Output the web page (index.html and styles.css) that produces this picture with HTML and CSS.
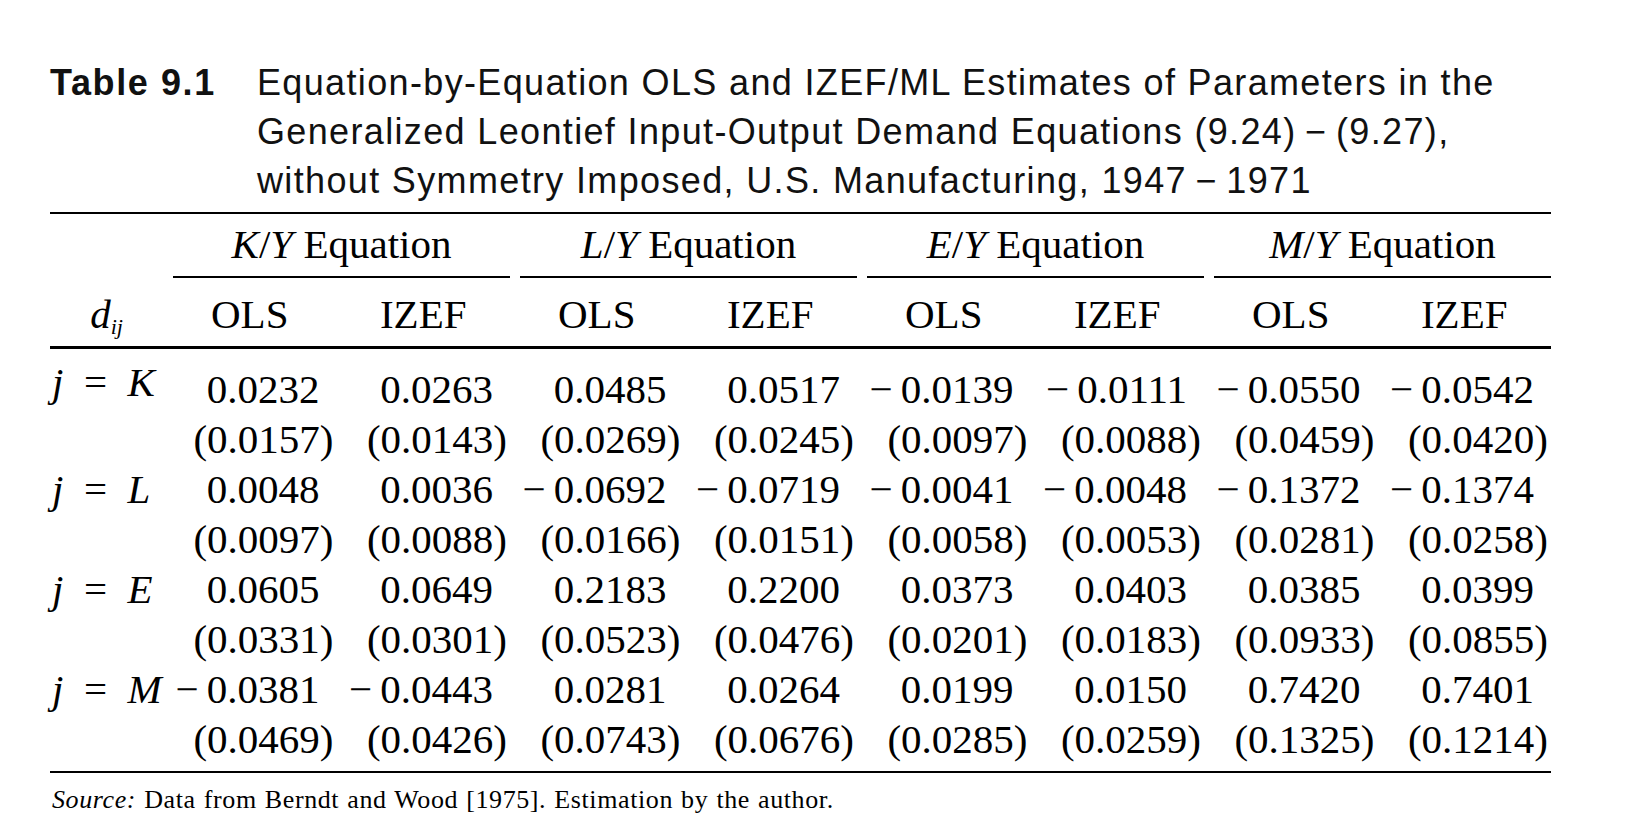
FILE: index.html
```html
<!DOCTYPE html>
<html lang="en">
<head>
    <meta charset="UTF-8">
    <title>Table 9.1</title>
    <meta name="viewport" content="width=device-width, initial-scale=1.0">
    <link rel="stylesheet" href="styles.css">
</head>
<body>
    <div class="page">
        <div class="caption">
            <div class="caption-label">Table 9.1</div>
            <div class="caption-text">
                Equation-by-Equation OLS and IZEF/ML Estimates of Parameters in the<br>
                Generalized Leontief Input-Output Demand Equations (9.24)&thinsp;&minus;&thinsp;(9.27),<br>
                without Symmetry Imposed, U.S. Manufacturing, 1947&thinsp;&minus;&thinsp;1971
            </div>
        </div>

        <table class="estimates">
            <colgroup>
                <col class="col-label">
                <col><col><col><col><col><col><col><col>
            </colgroup>
            <thead>
                <tr class="groups">
                    <th></th>
                    <th colspan="2"><div class="grp"><i>K</i>/<i>Y</i> Equation</div></th>
                    <th colspan="2"><div class="grp"><i>L</i>/<i>Y</i> Equation</div></th>
                    <th colspan="2"><div class="grp"><i>E</i>/<i>Y</i> Equation</div></th>
                    <th colspan="2"><div class="grp"><i>M</i>/<i>Y</i> Equation</div></th>
                </tr>
                <tr class="methods">
                    <th><i>d</i><sub><i>ij</i></sub></th>
                    <th>OLS</th><th>IZEF</th>
                    <th>OLS</th><th>IZEF</th>
                    <th>OLS</th><th>IZEF</th>
                    <th>OLS</th><th>IZEF</th>
                </tr>
            </thead>
            <tbody>
                <tr class="est first">
                    <td class="lbl"><i>j</i>&ensp;=&ensp;<i>K</i></td>
                    <td>0.0232</td><td>0.0263</td><td>0.0485</td><td>0.0517</td>
                    <td>&minus;&thinsp;0.0139</td><td>&minus;&thinsp;0.0111</td><td>&minus;&thinsp;0.0550</td><td>&minus;&thinsp;0.0542</td>
                </tr>
                <tr class="se">
                    <td class="lbl"></td>
                    <td>(0.0157)</td><td>(0.0143)</td><td>(0.0269)</td><td>(0.0245)</td>
                    <td>(0.0097)</td><td>(0.0088)</td><td>(0.0459)</td><td>(0.0420)</td>
                </tr>
                <tr class="est">
                    <td class="lbl"><i>j</i>&ensp;=&ensp;<i>L</i></td>
                    <td>0.0048</td><td>0.0036</td><td>&minus;&thinsp;0.0692</td><td>&minus;&thinsp;0.0719</td>
                    <td>&minus;&thinsp;0.0041</td><td>&minus;&thinsp;0.0048</td><td>&minus;&thinsp;0.1372</td><td>&minus;&thinsp;0.1374</td>
                </tr>
                <tr class="se">
                    <td class="lbl"></td>
                    <td>(0.0097)</td><td>(0.0088)</td><td>(0.0166)</td><td>(0.0151)</td>
                    <td>(0.0058)</td><td>(0.0053)</td><td>(0.0281)</td><td>(0.0258)</td>
                </tr>
                <tr class="est">
                    <td class="lbl"><i>j</i>&ensp;=&ensp;<i>E</i></td>
                    <td>0.0605</td><td>0.0649</td><td>0.2183</td><td>0.2200</td>
                    <td>0.0373</td><td>0.0403</td><td>0.0385</td><td>0.0399</td>
                </tr>
                <tr class="se">
                    <td class="lbl"></td>
                    <td>(0.0331)</td><td>(0.0301)</td><td>(0.0523)</td><td>(0.0476)</td>
                    <td>(0.0201)</td><td>(0.0183)</td><td>(0.0933)</td><td>(0.0855)</td>
                </tr>
                <tr class="est">
                    <td class="lbl"><i>j</i>&ensp;=&ensp;<i>M</i></td>
                    <td>&minus;&thinsp;0.0381</td><td>&minus;&thinsp;0.0443</td><td>0.0281</td><td>0.0264</td>
                    <td>0.0199</td><td>0.0150</td><td>0.7420</td><td>0.7401</td>
                </tr>
                <tr class="se last">
                    <td class="lbl"></td>
                    <td>(0.0469)</td><td>(0.0426)</td><td>(0.0743)</td><td>(0.0676)</td>
                    <td>(0.0285)</td><td>(0.0259)</td><td>(0.1325)</td><td>(0.1214)</td>
                </tr>
            </tbody>
        </table>

        <p class="source"><i>Source:</i> Data from Berndt and Wood [1975]. Estimation by the author.</p>
    </div>
</body>
</html>
```

FILE: styles.css
```css
body {
    margin: 0;
    background: #fff;
    color: #000;
}
.page {
    padding: 58px 0 0 50px;
}

/* Caption */
.caption {
    display: flex;
    font-family: 'Liberation Sans', Arial, sans-serif;
    font-size: 36px;
    line-height: 49px;
    margin-bottom: 7px;
    color: #111;
}
.caption-label {
    width: 207px;
    font-weight: bold;
    letter-spacing: 1.6px;
    flex-shrink: 0;
}
.caption-text {
    white-space: nowrap;
    letter-spacing: 1.35px;
}

/* Table */
.estimates {
    width: 1501px;
    table-layout: fixed;
    border-collapse: separate;
    border-spacing: 0;
    border-top: 2px solid #000;
    border-bottom: 2px solid #000;
    font-family: 'Liberation Serif', 'Times New Roman', serif;
    font-size: 41px;
}
.col-label {
    width: 113px;
}
.estimates th {
    font-weight: normal;
    padding: 0;
}
.groups th {
    vertical-align: bottom;
}
.grp {
    padding: 6px 0 7px;
    line-height: 49px;
    border-bottom: 2px solid #000;
    margin-left: 10px;
    text-align: center;
}
.methods th {
    padding: 12px 0 7px;
    line-height: 49px;
    border-bottom: 3px solid #000;
    text-align: center;
}
.methods sub {
    font-size: 22px;
    vertical-align: -6px;
    line-height: 0;
}
.estimates td {
    padding: 0 3px 0 0;
    line-height: 50px;
    text-align: right;
    white-space: nowrap;
}
.est td {
    padding-right: 17px;
}
.estimates td.lbl {
    text-align: left;
    padding: 0 0 0 2px;
}
.first td {
    padding-top: 15px;
}
.last td {
    padding-bottom: 7px;
}

/* Source note */
.source {
    margin: 13px 0 0 2px;
    font-family: 'Liberation Serif', 'Times New Roman', serif;
    font-size: 26px;
    line-height: 28px;
    letter-spacing: 0.6px;
    word-spacing: 1px;
}
```
